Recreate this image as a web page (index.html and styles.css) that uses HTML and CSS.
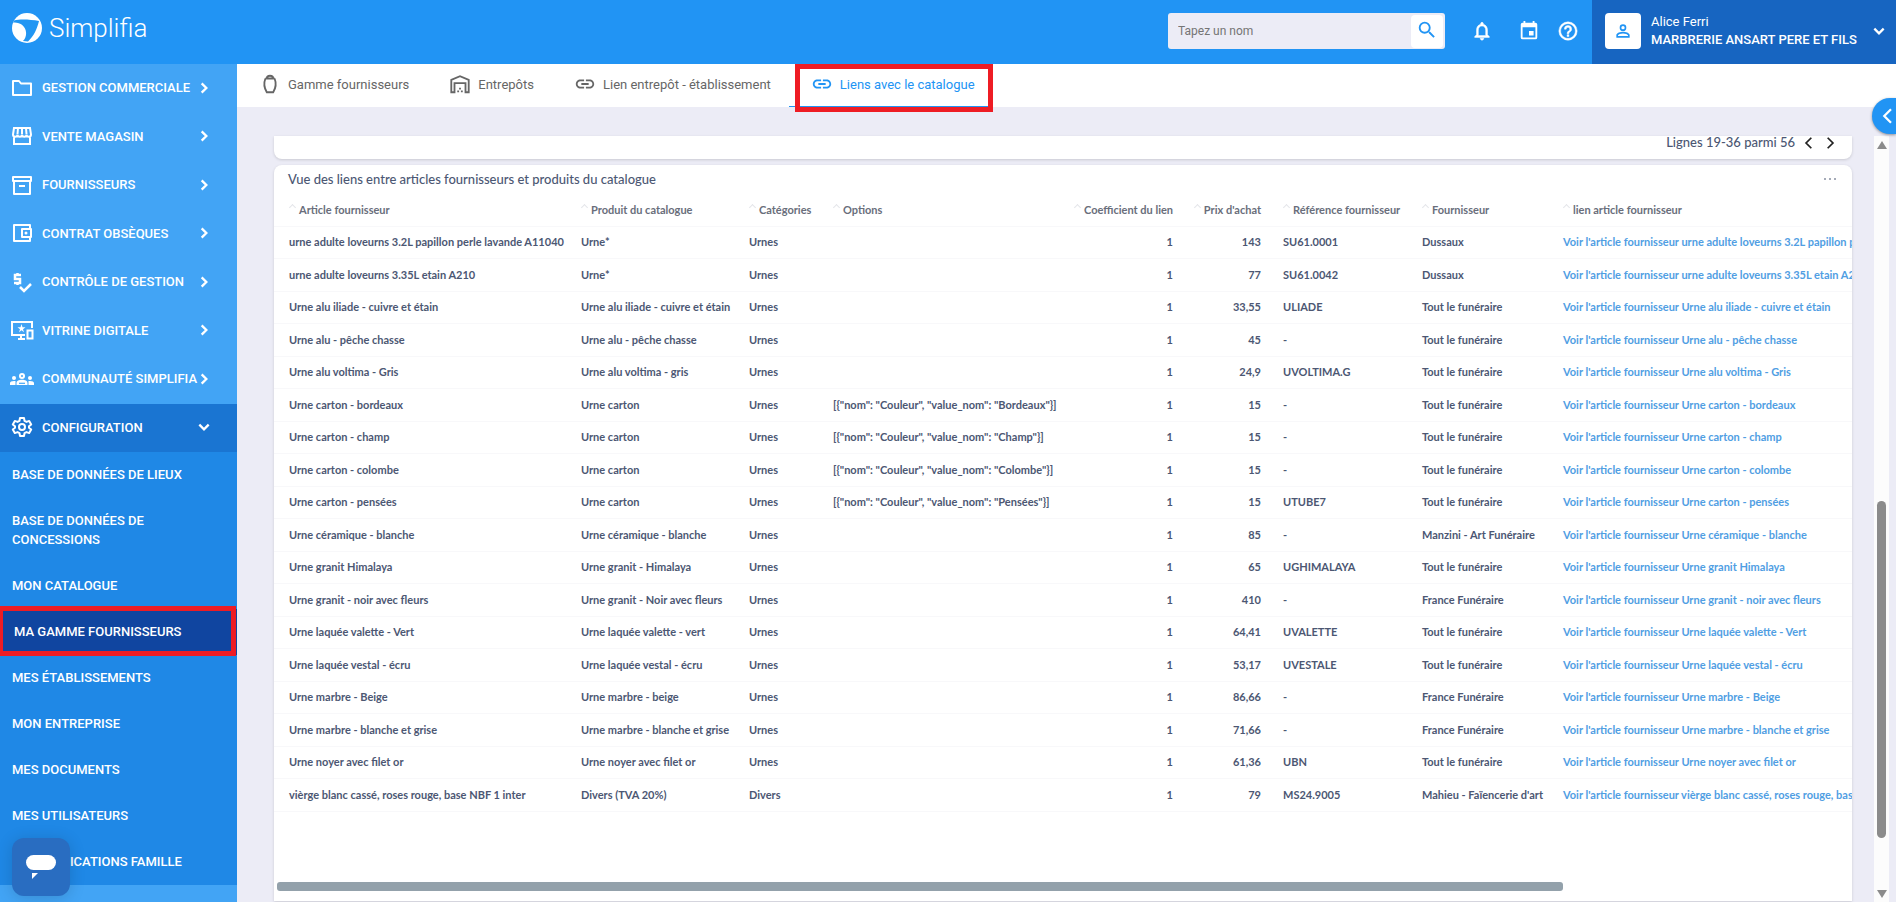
FILE: index.html
```html
<!DOCTYPE html>
<html lang="fr">
<head>
    <meta charset="utf-8">
    <title>Simplifia</title>
    <link rel="stylesheet" href="styles.css">
</head>
<body>
    <svg class="sprite" aria-hidden="true">
        <symbol id="chevron" viewBox="0 0 24 24"><path d="M8 4l8 8-8 8" fill="none" stroke="currentColor" stroke-width="4"/></symbol>
        <symbol id="thin-chevron" viewBox="0 0 24 24"><path d="M8 3l9 9-9 9" fill="none" stroke="currentColor" stroke-width="3"/></symbol>
        <symbol id="link" viewBox="0 0 24 24"><path fill="currentColor" d="M3.900 12c0-1.710 1.390-3.100 3.100-3.100h4V7H7c-2.760 0-5 2.240-5 5s2.240 5 5 5h4v-1.900H7c-1.710 0-3.100-1.390-3.100-3.100zM8 13h8v-2H8v2zm9-6h-4v1.900h4c1.710 0 3.100 1.390 3.100 3.100s-1.390 3.100-3.100 3.100h-4V17h4c2.760 0 5-2.240 5-5s-2.240-5-5-5z"/></symbol>
    </svg>

    <header class="topbar">
        <a class="logo" href="#">
            <svg viewBox="0 0 30 30" width="30" height="30"><circle cx="15" cy="15" r="15" fill="#fff"/><path d="M2 7.500C8 6 18 6.500 27 8c-2 8-5 15-11 20.500l-5-.5c4-4 4-10 1-14C9.500 10.500 6 9.500 1 9.500z" fill="#2196f3"/></svg>
            <span>Simplifia</span>
        </a>
        <form class="search">
            <input type="text" placeholder="Tapez un nom" aria-label="Tapez un nom">
            <button type="button" aria-label="Rechercher"><svg viewBox="0 0 24 24" width="22" height="22"><path fill="currentColor" d="M15.500 14h-.79l-.28-.27A6.470 6.470 0 0 0 16 9.500 6.500 6.500 0 1 0 9.500 16c1.610 0 3.090-.59 4.230-1.570l.27.28v.79l5 4.990L20.490 19l-4.990-5zm-6 0C7.010 14 5 11.990 5 9.500S7.010 5 9.500 5 14 7.010 14 9.500 11.990 14 9.500 14z"/></svg></button>
        </form>
        <div class="tools">
            <button type="button" aria-label="Notifications"><svg viewBox="0 0 24 24" width="22" height="22"><path fill="currentColor" d="M12 22c1.100 0 2-.9 2-2h-4c0 1.100.9 2 2 2zm6-6v-5c0-3.070-1.630-5.640-4.500-6.320V4c0-.83-.67-1.500-1.500-1.500s-1.500.67-1.500 1.500v.68C7.640 5.360 6 7.920 6 11v5l-2 2v1h16v-1l-2-2zm-2 1H8v-6c0-2.480 1.510-4.500 4-4.500s4 2.020 4 4.500v6z" stroke="currentColor" stroke-width=".5"/></svg></button>
            <button type="button" aria-label="Agenda"><svg viewBox="0 0 24 24" width="22" height="22"><path fill="currentColor" d="M17 12h-5v5h5v-5zM16 1v2H8V1H6v2H5a2 2 0 0 0-2 2v14a2 2 0 0 0 2 2h14a2 2 0 0 0 2-2V5a2 2 0 0 0-2-2h-1V1h-2zm3 18H5V8h14v11z"/></svg></button>
            <button type="button" aria-label="Aide"><svg viewBox="0 0 24 24" width="22" height="22"><path fill="currentColor" d="M11 18h2v-2h-2v2zm1-16a10 10 0 1 0 0 20 10 10 0 0 0 0-20zm0 18c-4.410 0-8-3.590-8-8s3.590-8 8-8 8 3.590 8 8-3.590 8-8 8zm0-14a4 4 0 0 0-4 4h2a2 2 0 1 1 4 0c0 2-3 1.750-3 5h2c0-2.250 3-2.500 3-5a4 4 0 0 0-4-4z" stroke="currentColor" stroke-width=".5"/></svg></button>
        </div>
        <div class="user">
            <span class="avatar"><svg viewBox="0 0 24 24" width="20" height="20"><path fill="currentColor" d="M12 6a2 2 0 1 1 0 4 2 2 0 0 1 0-4m0 9c2.700 0 5.800 1.290 6 2v1H6v-.99c.2-.72 3.300-2.010 6-2.010m0-11a4 4 0 1 0 0 8 4 4 0 0 0 0-8zm0 9c-2.670 0-8 1.340-8 4v3h16v-3c0-2.660-5.330-4-8-4z"/></svg></span>
            <div class="who">
                <div>Alice Ferri</div>
                <div class="company">MARBRERIE ANSART PERE ET FILS</div>
            </div>
            <svg class="down" width="14" height="14"><use href="#chevron"/></svg>
        </div>
    </header>

    <div class="layout">
        <nav class="sidebar">
            <ul class="menu">
                <li><a href="#"><svg viewBox="0 0 24 24" width="24" height="24"><path d="M3 5h6l2 2.500h10V19H3z" fill="none" stroke="currentColor" stroke-width="2" stroke-linejoin="round"/></svg><span>GESTION COMMERCIALE</span><svg class="arrow" width="14" height="14"><use href="#chevron"/></svg></a></li>
                <li><a href="#"><svg viewBox="0 0 24 24" width="24" height="24"><path d="M4 4h16l1 6.500a2.200 2.200 0 0 1-4.500 0 2.200 2.200 0 0 1-4.500 0 2.200 2.200 0 0 1-4.500 0 2.200 2.200 0 0 1-4.500 0zM8 4l-.5 6M12 4v6M16 4l.5 6M4 12v8h16v-8" fill="none" stroke="currentColor" stroke-width="2"/></svg><span>VENTE MAGASIN</span><svg class="arrow" width="14" height="14"><use href="#chevron"/></svg></a></li>
                <li><a href="#"><svg viewBox="0 0 24 24" width="24" height="24"><path d="M3 4h18v4H3zM4 8v13h16V8M9 13h6" fill="none" stroke="currentColor" stroke-width="2" stroke-linejoin="round"/></svg><span>FOURNISSEURS</span><svg class="arrow" width="14" height="14"><use href="#chevron"/></svg></a></li>
                <li><a href="#"><svg viewBox="0 0 24 24" width="24" height="24"><path d="M20 7V4H4v16h16v-3M12 8h9v8h-9z" fill="none" stroke="currentColor" stroke-width="2" stroke-linejoin="round"/><circle cx="16" cy="12" r="1.500" fill="currentColor"/></svg><span>CONTRAT OBSÈQUES</span><svg class="arrow" width="14" height="14"><use href="#chevron"/></svg></a></li>
                <li><a href="#"><svg viewBox="0 0 24 24" width="24" height="24"><path d="M11 5H5v4h5v4H4M7.500 3v2M7.500 13v2M10 17l4 4 7-7" fill="none" stroke="currentColor" stroke-width="2.500"/></svg><span>CONTRÔLE DE GESTION</span><svg class="arrow" width="14" height="14"><use href="#chevron"/></svg></a></li>
                <li><a href="#"><svg viewBox="0 0 24 24" width="24" height="24"><path d="M22 10V4H2v13h13M8 21h7M11 17v4M17.500 12.500h5v8h-5z" fill="none" stroke="currentColor" stroke-width="2"/><path d="M11.500 6l1 3.200h3l-2.500 2 1 3-2.500-2-2.500 2 1-3-2.500-2h3z" fill="currentColor"/></svg><span>VITRINE DIGITALE</span><svg class="arrow" width="14" height="14"><use href="#chevron"/></svg></a></li>
                <li><a href="#"><svg viewBox="0 0 24 24" width="24" height="24"><g fill="currentColor"><circle cx="4" cy="11" r="2"/><circle cx="20" cy="11" r="2"/><path d="M0 18v-2c0-1.500 2-2.300 5.500-2v4zM24 18v-2c0-1.500-2-2.300-5.500-2v4zM6.500 18v-2c0-2 2.500-3.200 5.500-3.200s5.500 1.200 5.500 3.200v2z"/><path d="M12 6a3 3 0 1 1 0 6 3 3 0 0 1 0-6z"/></g><path d="M9 16.300h6" stroke="#42a5f5" stroke-width="1.200"/><circle cx="12" cy="9" r="1" fill="#42a5f5"/></svg><span>COMMUNAUTÉ SIMPLIFIA</span><svg class="arrow" width="14" height="14"><use href="#chevron"/></svg></a></li>
                <li class="open"><a href="#"><svg viewBox="0 0 24 24" width="24" height="24"><path d="M10 3h4l.5 2.800 2 1.100 2.700-1 2 3.500-2.200 1.800v1.600l2.200 1.800-2 3.500-2.700-1-2 1.100L14 21h-4l-.5-2.800-2-1.100-2.700 1-2-3.500L5 12.800v-1.600L2.800 9.400l2-3.500 2.700 1 2-1.100z" fill="none" stroke="currentColor" stroke-width="2" stroke-linejoin="round"/><circle cx="12" cy="12" r="3" fill="none" stroke="currentColor" stroke-width="2"/></svg><span>CONFIGURATION</span><svg class="arrow" width="14" height="14"><use href="#chevron"/></svg></a></li>
            </ul>
            <ul class="submenu">
                <li><a href="#">BASE DE DONNÉES DE LIEUX</a></li>
                <li><a href="#">BASE DE DONNÉES DE CONCESSIONS</a></li>
                <li><a href="#">MON CATALOGUE</a></li>
                <li class="current"><a href="#">MA GAMME FOURNISSEURS</a></li>
                <li><a href="#">MES ÉTABLISSEMENTS</a></li>
                <li><a href="#">MON ENTREPRISE</a></li>
                <li><a href="#">MES DOCUMENTS</a></li>
                <li><a href="#">MES UTILISATEURS</a></li>
                <li><a href="#">COMMUNICATIONS FAMILLE</a></li>
            </ul>
        </nav>

        <main class="content">
            <div class="tabs">
                <a href="#"><svg viewBox="0 0 24 24" width="22" height="22"><path d="M7 6h10M8.500 6c0-2 1-3 3.500-3s3.500 1 3.500 3M7 6c-2 5-1.500 10 1.500 15h7c3-5 3.500-10 1.500-15" fill="none" stroke="currentColor" stroke-width="2"/></svg>Gamme fournisseurs</a>
                <a href="#"><svg viewBox="0 0 24 24" width="22" height="22"><path d="M2.500 21V7.500L12 3.500l9.500 4V21H18V11H6v10zM10 21v-2M14 21v-2M12 18v-2" fill="none" stroke="currentColor" stroke-width="2"/></svg>Entrepôts</a>
                <a href="#"><svg width="22" height="22"><use href="#link"/></svg>Lien entrepôt - établissement</a>
                <a class="active" href="#"><svg width="22" height="22"><use href="#link"/></svg>Liens avec le catalogue</a>
            </div>

            <div class="body">
                <div class="cards">
                    <section class="card pager">
                        <span>Lignes 19-36 parmi 56</span>
                        <button type="button" class="prev" aria-label="Précédent"><svg width="14" height="14"><use href="#thin-chevron"/></svg></button>
                        <button type="button" aria-label="Suivant"><svg width="14" height="14"><use href="#thin-chevron"/></svg></button>
                    </section>
                    <section class="card view">
                        <div class="view-head">
                            <h2>Vue des liens entre articles fournisseurs et produits du catalogue</h2>
                            <button type="button" aria-label="Options de la vue"><svg viewBox="0 0 12 2" width="12" height="2"><path d="M0 0h2v2H0zM5 0h2v2H5zM10 0h2v2h-2z" fill="currentColor"/></svg></button>
                        </div>
                        <table class="table">
                            <colgroup><col class="c-article"><col class="c-produit"><col class="c-cat"><col class="c-options"><col class="c-coef"><col class="c-prix"><col class="c-ref"><col class="c-fourn"><col></colgroup>
                            <thead>
                                <tr><th>Article fournisseur</th><th>Produit du catalogue</th><th>Catégories</th><th>Options</th><th class="num">Coefficient du lien</th><th class="num">Prix d'achat</th><th>Référence fournisseur</th><th>Fournisseur</th><th>lien article fournisseur</th></tr>
                            </thead>
                            <tbody>
                                <tr><td>urne adulte loveurns 3.2L papillon perle lavande A11040</td><td>Urne*</td><td>Urnes</td><td></td><td class="num">1</td><td class="num">143</td><td>SU61.0001</td><td>Dussaux</td><td><a href="#">Voir l'article fournisseur urne adulte loveurns 3.2L papillon perle lavande A11040</a></td></tr>
                                <tr><td>urne adulte loveurns 3.35L etain A210</td><td>Urne*</td><td>Urnes</td><td></td><td class="num">1</td><td class="num">77</td><td>SU61.0042</td><td>Dussaux</td><td><a href="#">Voir l'article fournisseur urne adulte loveurns 3.35L etain A210</a></td></tr>
                                <tr><td>Urne alu iliade - cuivre et étain</td><td>Urne alu iliade - cuivre et étain</td><td>Urnes</td><td></td><td class="num">1</td><td class="num">33,55</td><td>ULIADE</td><td>Tout le funéraire</td><td><a href="#">Voir l'article fournisseur Urne alu iliade - cuivre et étain</a></td></tr>
                                <tr><td>Urne alu - pêche chasse</td><td>Urne alu - pêche chasse</td><td>Urnes</td><td></td><td class="num">1</td><td class="num">45</td><td>-</td><td>Tout le funéraire</td><td><a href="#">Voir l'article fournisseur Urne alu - pêche chasse</a></td></tr>
                                <tr><td>Urne alu voltima - Gris</td><td>Urne alu voltima - gris</td><td>Urnes</td><td></td><td class="num">1</td><td class="num">24,9</td><td>UVOLTIMA.G</td><td>Tout le funéraire</td><td><a href="#">Voir l'article fournisseur Urne alu voltima - Gris</a></td></tr>
                                <tr><td>Urne carton - bordeaux</td><td>Urne carton</td><td>Urnes</td><td>[{"nom": "Couleur", "value_nom": "Bordeaux"}]</td><td class="num">1</td><td class="num">15</td><td>-</td><td>Tout le funéraire</td><td><a href="#">Voir l'article fournisseur Urne carton - bordeaux</a></td></tr>
                                <tr><td>Urne carton - champ</td><td>Urne carton</td><td>Urnes</td><td>[{"nom": "Couleur", "value_nom": "Champ"}]</td><td class="num">1</td><td class="num">15</td><td>-</td><td>Tout le funéraire</td><td><a href="#">Voir l'article fournisseur Urne carton - champ</a></td></tr>
                                <tr><td>Urne carton - colombe</td><td>Urne carton</td><td>Urnes</td><td>[{"nom": "Couleur", "value_nom": "Colombe"}]</td><td class="num">1</td><td class="num">15</td><td>-</td><td>Tout le funéraire</td><td><a href="#">Voir l'article fournisseur Urne carton - colombe</a></td></tr>
                                <tr><td>Urne carton - pensées</td><td>Urne carton</td><td>Urnes</td><td>[{"nom": "Couleur", "value_nom": "Pensées"}]</td><td class="num">1</td><td class="num">15</td><td>UTUBE7</td><td>Tout le funéraire</td><td><a href="#">Voir l'article fournisseur Urne carton - pensées</a></td></tr>
                                <tr><td>Urne céramique - blanche</td><td>Urne céramique - blanche</td><td>Urnes</td><td></td><td class="num">1</td><td class="num">85</td><td>-</td><td>Manzini - Art Funéraire</td><td><a href="#">Voir l'article fournisseur Urne céramique - blanche</a></td></tr>
                                <tr><td>Urne granit Himalaya</td><td>Urne granit - Himalaya</td><td>Urnes</td><td></td><td class="num">1</td><td class="num">65</td><td>UGHIMALAYA</td><td>Tout le funéraire</td><td><a href="#">Voir l'article fournisseur Urne granit Himalaya</a></td></tr>
                                <tr><td>Urne granit - noir avec fleurs</td><td>Urne granit - Noir avec fleurs</td><td>Urnes</td><td></td><td class="num">1</td><td class="num">410</td><td>-</td><td>France Funéraire</td><td><a href="#">Voir l'article fournisseur Urne granit - noir avec fleurs</a></td></tr>
                                <tr><td>Urne laquée valette - Vert</td><td>Urne laquée valette - vert</td><td>Urnes</td><td></td><td class="num">1</td><td class="num">64,41</td><td>UVALETTE</td><td>Tout le funéraire</td><td><a href="#">Voir l'article fournisseur Urne laquée valette - Vert</a></td></tr>
                                <tr><td>Urne laquée vestal - écru</td><td>Urne laquée vestal - écru</td><td>Urnes</td><td></td><td class="num">1</td><td class="num">53,17</td><td>UVESTALE</td><td>Tout le funéraire</td><td><a href="#">Voir l'article fournisseur Urne laquée vestal - écru</a></td></tr>
                                <tr><td>Urne marbre - Beige</td><td>Urne marbre - beige</td><td>Urnes</td><td></td><td class="num">1</td><td class="num">86,66</td><td>-</td><td>France Funéraire</td><td><a href="#">Voir l'article fournisseur Urne marbre - Beige</a></td></tr>
                                <tr><td>Urne marbre - blanche et grise</td><td>Urne marbre - blanche et grise</td><td>Urnes</td><td></td><td class="num">1</td><td class="num">71,66</td><td>-</td><td>France Funéraire</td><td><a href="#">Voir l'article fournisseur Urne marbre - blanche et grise</a></td></tr>
                                <tr><td>Urne noyer avec filet or</td><td>Urne noyer avec filet or</td><td>Urnes</td><td></td><td class="num">1</td><td class="num">61,36</td><td>UBN</td><td>Tout le funéraire</td><td><a href="#">Voir l'article fournisseur Urne noyer avec filet or</a></td></tr>
                                <tr><td>vièrge blanc cassé, roses rouge, base NBF 1 inter</td><td>Divers (TVA 20%)</td><td>Divers</td><td></td><td class="num">1</td><td class="num">79</td><td>MS24.9005</td><td>Mahieu - Faïencerie d'art</td><td><a href="#">Voir l'article fournisseur vièrge blanc cassé, roses rouge, base NBF 1 inter</a></td></tr>
                            </tbody>
                        </table>
                        <div class="hscroll"><div class="hthumb"></div></div>
                    </section>
                </div>
                <div class="vscroll">
                    <svg viewBox="0 0 10 8" width="10" height="8"><path d="M5 0l5 8H0z" fill="#8b8b8b"/></svg>
                    <div class="vtrack"><div class="vthumb"></div></div>
                    <svg viewBox="0 0 10 8" width="10" height="8"><path d="M0 0h10L5 8z" fill="#8b8b8b"/></svg>
                </div>
            </div>
        </main>
    </div>

    <button type="button" class="drawer" aria-label="Ouvrir le panneau"><svg width="18" height="18"><use href="#thin-chevron"/></svg></button>
    <button type="button" class="chat" aria-label="Chat"><svg viewBox="0 0 30 24" width="30" height="24"><rect y="0" width="30" height="15" rx="7.500" fill="#fff"/><path d="M6 18h6l-6 6z" fill="#fff"/></svg></button>
</body>
</html>
```

FILE: styles.css
```css
* {
    box-sizing: border-box;
}

body {
    margin: 0;
    height: 100vh;
    display: flex;
    flex-direction: column;
    overflow: hidden;
    font-family: Roboto, "Liberation Sans", sans-serif;
    font-size: 13px;
    background-color: #ececf6;
}

a {
    color: inherit;
    text-decoration: none;
}

button {
    border: none;
    padding: 0;
    background: none;
    color: inherit;
    display: flex;
    align-items: center;
    justify-content: center;
}

ul {
    list-style: none;
    margin: 0;
    padding: 0;
}

svg {
    flex-shrink: 0;
}

.sprite {
    display: none;
}

/* top bar */
.topbar {
    flex-shrink: 0;
    display: flex;
    align-items: center;
    height: 64px;
    background-color: #2194f4;
    color: #fff;
}

.logo {
    display: flex;
    align-items: center;
    gap: 7px;
    margin: 0 auto 8px 12px;
    font-size: 26px;
    font-weight: 300;
    line-height: 30px;
}

.search {
    display: flex;
    align-items: center;
    width: 277px;
    height: 36px;
    padding-right: 2px;
    margin: 0 26px 2px 0;
    border-radius: 3px;
    background-color: #ececf6;
}

.search input {
    flex: 1;
    min-width: 0;
    padding: 0 10px;
    border: none;
    outline: none;
    background: none;
    font-family: inherit;
    font-size: 12px;
}

.search input::placeholder {
    color: #757575;
}

.search button {
    width: 32px;
    height: 33px;
    padding-bottom: 2px;
    border-radius: 4px;
    background-color: #fff;
    color: #2194f4;
}

.tools {
    display: flex;
    gap: 17px;
    margin: 0 13px 2px 0;
}

.tools button:first-child {
    margin-right: 8px;
}

.user {
    display: flex;
    align-items: center;
    width: 304px;
    height: 64px;
    padding: 0 10px 2px 13px;
    background-color: #1765c1;
}

.avatar {
    display: flex;
    align-items: center;
    justify-content: center;
    width: 36px;
    height: 36px;
    margin-right: 10px;
    border-radius: 4px;
    background-color: #fff;
    color: #2194f4;
}

.who {
    flex: 1;
    line-height: 18px;
    white-space: nowrap;
}

.company {
    font-weight: 500;
}

.down,
.open .arrow {
    transform: rotate(90deg);
}

/* side menu */
.layout {
    flex: 1;
    min-height: 0;
    display: flex;
}

.sidebar {
    flex-shrink: 0;
    width: 237px;
    background-color: #42a4f5;
    color: #fff;
    font-weight: 500;
}

.menu a {
    display: flex;
    align-items: center;
    height: 49px;
    padding: 0 26px 2px 10px;
    white-space: nowrap;
}

.menu span {
    margin-left: 8px;
}

.menu li:nth-child(even) a {
    height: 48px;
}

.menu .open a {
    height: 49px;
    background-color: #1a75d2;
}

.arrow {
    margin-left: auto;
}

.submenu {
    background-color: #1f88e6;
}

.submenu a {
    display: block;
    padding: 13px 40px 14px 12px;
    line-height: 19px;
}

.submenu .current {
    position: relative;
    background-color: #1045a0;
}

.submenu .current a {
    padding-left: 14px;
}

.current::after {
    content: "";
    position: absolute;
    inset: -3px 1px -1px -2px;
    border: 5px solid #ee1c24;
}

/* tabs */
.content {
    flex: 1;
    min-width: 0;
    display: flex;
    flex-direction: column;
}

.tabs {
    display: flex;
    height: 43px;
    background-color: #fff;
    color: #666;
}

.tabs a {
    position: relative;
    display: flex;
    align-items: center;
    gap: 7px;
    padding: 0 18px 2px 22px;
    border-bottom: 1px solid transparent;
}

.tabs .active {
    color: #2194f4;
    border-color: #2194f4;
}

.tabs .active::after {
    content: "";
    position: absolute;
    inset: 0 0 -6px 6px;
    border: 5px solid #ee1c24;
}

/* cards */
.body {
    flex: 1;
    min-height: 0;
    display: flex;
    gap: 22px;
    padding: 29px 7px 0 37px;
}

.cards {
    flex: 1;
    min-width: 0;
    display: flex;
    flex-direction: column;
    gap: 6px;
    padding-bottom: 1px;
    font-family: Lato, "Liberation Sans", sans-serif;
    color: #4c5773;
}

.card {
    background-color: #fff;
    border-radius: 8px;
    box-shadow: 0 1px 3px rgba(0, 0, 0, 0.15);
}

.pager {
    flex-shrink: 0;
    display: flex;
    justify-content: flex-end;
    gap: 6px;
    height: 23px;
    padding: 0 15px 10px 0;
    border-radius: 0 0 8px 8px;
    font-weight: 500;
    line-height: 13px;
}

.pager button {
    width: 15px;
    color: #222;
}

.pager .prev svg,
.drawer svg {
    transform: rotate(180deg);
}

.view {
    flex: 1;
    min-height: 0;
    display: flex;
    flex-direction: column;
    overflow: hidden;
    border-radius: 8px 8px 0 0;
}

.view-head {
    display: flex;
    justify-content: space-between;
    align-items: center;
    height: 28px;
    padding: 0 16px 0 14px;
}

.view-head h2 {
    margin: 0;
    font-size: 13px;
    font-weight: 500;
}

.view-head button {
    color: #a5abb8;
}

.table {
    table-layout: fixed;
    border-collapse: separate;
    border-spacing: 0;
    width: 1780px;
    font-size: 11px;
    font-weight: 700;
}

.c-article { width: 296px; }
.c-produit { width: 168px; }
.c-cat { width: 84px; }
.c-options { width: 242px; }
.c-coef { width: 120px; }
.c-prix { width: 88px; }
.c-ref { width: 139px; }
.c-fourn { width: 141px; }

.table th,
.table td {
    height: 32px;
    padding: 0 11px 2px;
    border-bottom: 1px solid #f8f8fa;
    text-align: left;
    white-space: nowrap;
}

.table tbody tr:nth-child(even) td {
    height: 33px;
}

.table th {
    height: 34px;
    padding-bottom: 0;
    color: #696e7b;
    font-weight: 700;
}

.table th::before {
    content: "";
    display: inline-block;
    width: 4px;
    height: 4px;
    margin: 0 4px 4px 1px;
    border: solid #e4e6ea;
    border-width: 1px 0 0 1px;
    transform: rotate(45deg);
}

.table th:first-child,
.table td:first-child {
    padding-left: 15px;
}

.table .num {
    padding-left: 8px;
    text-align: right;
}

.table td a {
    color: #509ee3;
}

.hscroll {
    margin-top: auto;
    padding: 0 289px 10px 3px;
}

.hthumb {
    height: 9px;
    border-radius: 3px;
    background-color: #93a1ab;
}

.vscroll {
    display: flex;
    flex-direction: column;
    align-items: center;
    width: 15px;
    padding: 5px 0 4px;
    background-color: #fcfcfc;
}

.vtrack {
    flex: 1;
    display: flex;
    flex-direction: column;
    padding: 352px 0 52px;
}

.vthumb {
    flex: 1;
    width: 9px;
    border-radius: 5px;
    background-color: #8b8b8b;
}

/* floating buttons */
.drawer {
    position: absolute;
    top: 98px;
    right: 0;
    width: 24px;
    height: 36px;
    padding-left: 8px;
    border-radius: 18px 0 0 18px;
    background-color: #2194f4;
    color: #fff;
    box-shadow: 0 1px 3px rgba(0, 0, 0, 0.4);
}

.chat {
    position: absolute;
    left: 12px;
    bottom: 6px;
    width: 58px;
    height: 58px;
    border-radius: 12px;
    background-color: #296dc1;
    box-shadow: 0 2px 16px rgba(0, 0, 0, 0.15);
}
```
